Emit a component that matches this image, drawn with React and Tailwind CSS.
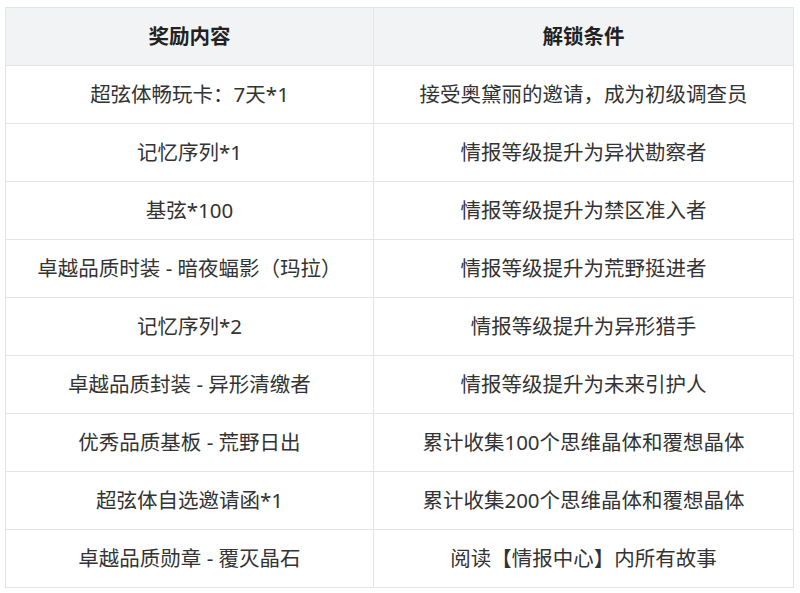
import React from "react";

const rows = [
  ["超弦体畅玩卡：7天*1", "接受奥黛丽的邀请，成为初级调查员"],
  ["记忆序列*1", "情报等级提升为异状勘察者"],
  ["基弦*100", "情报等级提升为禁区准入者"],
  ["卓越品质时装 - 暗夜蝠影（玛拉）", "情报等级提升为荒野挺进者"],
  ["记忆序列*2", "情报等级提升为异形猎手"],
  ["卓越品质封装 - 异形清缴者", "情报等级提升为未来引护人"],
  ["优秀品质基板 - 荒野日出", "累计收集100个思维晶体和覆想晶体"],
  ["超弦体自选邀请函*1", "累计收集200个思维晶体和覆想晶体"],
  ["卓越品质勋章 - 覆灭晶石", "阅读【情报中心】内所有故事"],
];

export default function App() {
  return (
    <div
      className="w-[800px] h-[593px] bg-white pt-[7px] pl-[5px]"
      style={{ fontFamily: '"Noto Sans", "Noto Sans CJK SC", sans-serif' }}
    >
      <table className="border-collapse w-[788px] table-fixed text-[20.5px] text-[#333]">
        <colgroup>
          <col className="w-[368px]" />
          <col className="w-[420px]" />
        </colgroup>
        <thead>
          <tr className="bg-[#f2f3f5] h-[58px]">
            <th className="border border-[#e3e4e8] font-bold text-[#222] text-center align-middle leading-none">奖励内容</th>
            <th className="border border-[#e3e4e8] font-bold text-[#222] text-center align-middle leading-none">解锁条件</th>
          </tr>
        </thead>
        <tbody>
          {rows.map((r, i) => (
            <tr key={i} className="h-[58px]">
              <td className="border border-[#e3e4e8] text-center align-middle leading-none">{r[0]}</td>
              <td className="border border-[#e3e4e8] text-center align-middle leading-none">{r[1]}</td>
            </tr>
          ))}
        </tbody>
      </table>
    </div>
  );
}
